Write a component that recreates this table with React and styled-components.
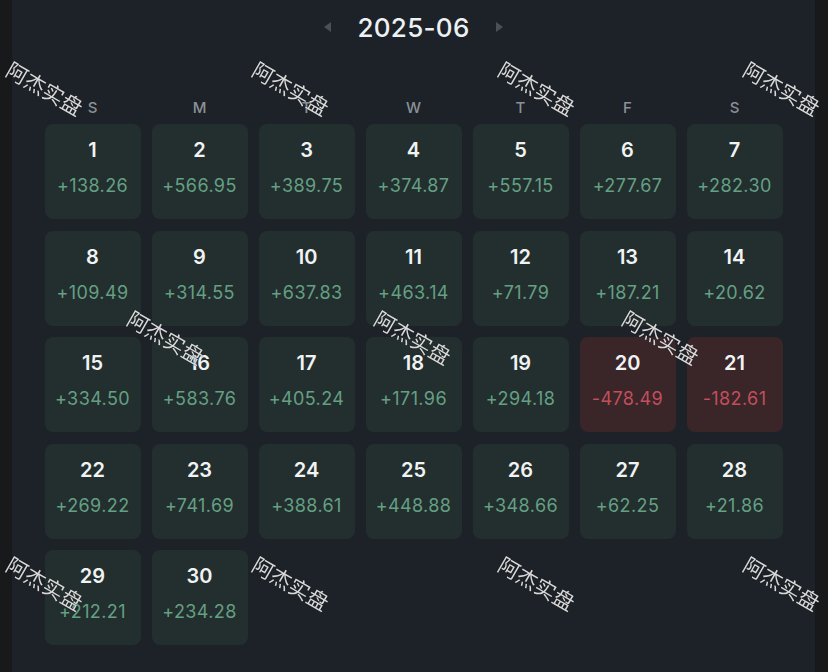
import React from 'react';
import styled, { createGlobalStyle } from 'styled-components';

// Daily P&L for June 2025 (the 1st falls on a Sunday)
const days = [
  '+138.26', '+566.95', '+389.75', '+374.87', '+557.15', '+277.67', '+282.30',
  '+109.49', '+314.55', '+637.83', '+463.14', '+71.79', '+187.21', '+20.62',
  '+334.50', '+583.76', '+405.24', '+171.96', '+294.18', '-478.49', '-182.61',
  '+269.22', '+741.69', '+388.61', '+448.88', '+348.66', '+62.25', '+21.86',
  '+212.21', '+234.28',
];

const weekdays = ['S', 'M', 'T', 'W', 'T', 'F', 'S'];

// watermark centres
const marks = [
  [45, 88], [291, 88], [537, 88], [782, 88],
  [166, 337], [413, 337], [661, 337],
  [45, 583], [291, 583], [537, 583], [782, 583],
];

const GlobalStyle = createGlobalStyle`
  html, body {
    margin: 0;
    padding: 0;
    background: #18191b;
  }
  body {
    font-family: Inter, "Noto Sans", "Noto Sans CJK SC", sans-serif;
  }
`;

const Page = styled.div`
  position: relative;
  width: 828px;
  height: 672px;
  overflow: hidden;
  display: flex;
  background: #18191b;
`;

const Panel = styled.div`
  margin: 0 13px 0 12px;
  flex: 1;
  background: #1d2229;
  display: flex;
  flex-direction: column;
  align-items: center;
`;

const Header = styled.div`
  height: 54px;
  display: flex;
  align-items: center;
  justify-content: center;
  gap: 26px;
`;

const Arrow = styled.span`
  width: 0;
  height: 0;
  border-top: 5px solid transparent;
  border-bottom: 5px solid transparent;
  ${(p) => (p.dir === 'left'
    ? 'border-right: 7px solid #4a5058;'
    : 'border-left: 7px solid #4a5058;')}
`;

const Title = styled.div`
  color: #eef1f2;
  font-size: 26px;
  font-weight: 500;
  letter-spacing: 0.3px;
`;

const Weekdays = styled.div`
  margin-top: 42px;
  display: grid;
  grid-template-columns: repeat(7, 96px);
  column-gap: 11px;
  height: 22px;
  align-items: center;
`;

const Weekday = styled.div`
  text-align: center;
  color: #8b9197;
  font-size: 15px;
  font-weight: 500;
`;

const Grid = styled.div`
  margin-top: 6px;
  display: grid;
  grid-template-columns: repeat(7, 96px);
  grid-auto-rows: 95px;
  column-gap: 11px;
  row-gap: 11.5px;
`;

const Cell = styled.div`
  border-radius: 8px;
  background: ${(p) => (p.loss ? '#3a2529' : '#232e2f')};
  display: flex;
  flex-direction: column;
  align-items: center;
  padding-top: 13px;
  box-sizing: border-box;
`;

const DayNum = styled.div`
  color: #f1f3f3;
  font-size: 20px;
  font-weight: 600;
  line-height: 26px;
`;

const Amount = styled.div`
  margin-top: 12px;
  color: ${(p) => (p.loss ? '#c24f5c' : '#64a083')};
  font-size: 18px;
  font-weight: 400;
  letter-spacing: 0.4px;
  line-height: 22px;
`;

const Watermark = styled.div`
  position: absolute;
  transform: translate(-50%, -50%) rotate(30deg);
  color: #d6d9dc;
  font-family: "Noto Sans CJK SC", sans-serif;
  font-size: 21px;
  font-weight: 400;
  white-space: nowrap;
  pointer-events: none;
  filter: grayscale(1);
  text-shadow: 0 0 1px #111;
`;

const App = () => {
  return (
    <>
      <GlobalStyle />
      <Page>
        <Panel>
          <Header>
            <Arrow dir="left" />
            <Title>2025-06</Title>
            <Arrow dir="right" />
          </Header>
          <Weekdays>
            {weekdays.map((d, i) => (
              <Weekday key={i}>{d}</Weekday>
            ))}
          </Weekdays>
          <Grid>
            {days.map((v, i) => {
              const loss = v.startsWith('-');
              return (
                <Cell key={i} loss={loss}>
                  <DayNum>{i + 1}</DayNum>
                  <Amount loss={loss}>{v}</Amount>
                </Cell>
              );
            })}
          </Grid>
        </Panel>
        {marks.map(([x, y], i) => (
          <Watermark key={i} style={{ left: x, top: y }}>阿杰实盘</Watermark>
        ))}
      </Page>
    </>
  );
};

export default App;
